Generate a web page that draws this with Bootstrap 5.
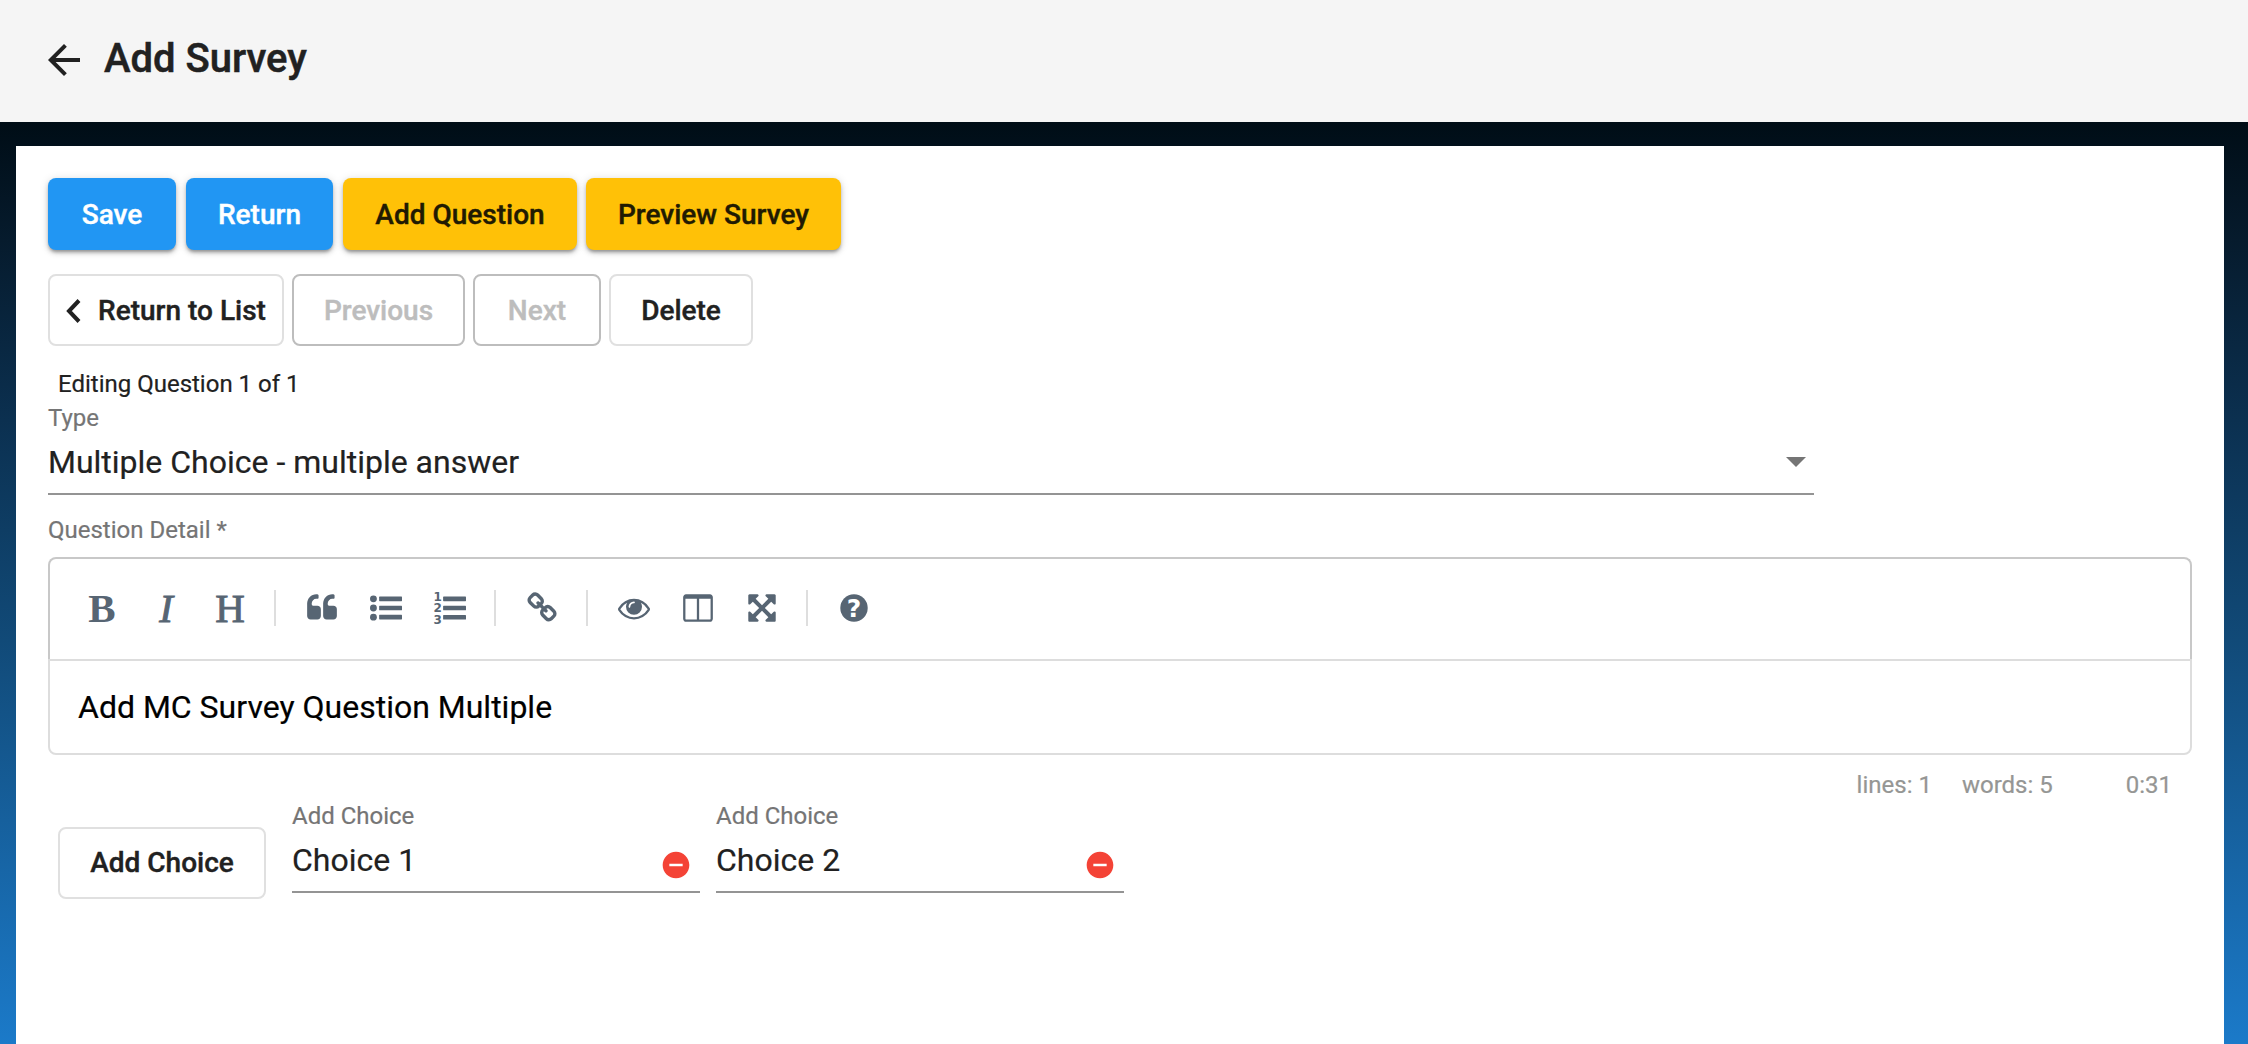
<!DOCTYPE html>
<html lang="en">
<head>
<meta charset="utf-8">
<title>Add Survey</title>
<link rel="stylesheet" href="https://cdn.jsdelivr.net/npm/bootstrap@5.3.0/dist/css/bootstrap.min.css">
<style>
  body { font-family: Roboto, sans-serif; color: #212121; font-size: 28px; line-height: 1; height: 1044px; overflow: hidden; -webkit-text-stroke: .2px currentColor;
    background: linear-gradient(180deg, #000d16 122px, #061b2d 240px, #0b3050 420px, #114a78 640px, #16609d 820px, #1b7ac9 1044px); }
  .topbar { height: 122px; background: #f5f5f5; padding: 0 40px 2px; }
  .topbar h1 { font-size: 40px; font-weight: 500; line-height: 48px; margin: 0 0 0 16px; padding-bottom: 3px; color: #212121; -webkit-text-stroke: .5px currentColor; }
  .panel { margin: 24px 24px 0 16px; padding: 32px; height: 898px; background: #fff; }
  .btn { --bs-btn-font-size: 28px; --bs-btn-font-weight: 500; --bs-btn-line-height: 1; --bs-btn-border-radius: 8px; --bs-btn-border-width: 2px;
    --bs-btn-padding-x: 0; --bs-btn-padding-y: 0; height: 72px; font-family: Roboto, sans-serif; color: #212121; display: inline-flex; align-items: center; justify-content: center; -webkit-text-stroke: .4px currentColor; }
  .btn-raised { border: 0; padding-top: 1px; box-shadow: 0 3px 3px -1px rgba(0,0,0,.25), 0 3px 5px rgba(0,0,0,.17), 0 1px 10px rgba(0,0,0,.12); }
  .btn-blue { background: #2196f3; color: #fff; }
  .btn-amber { background: #ffc107; color: #211a02; }
  .btn-line { background: #fff; border-color: #e0e0e0; }
  .btn-line:disabled { color: #bdbdbd; border-color: #bdbdbd; opacity: 1; }
  .w-save { width: 128px; } .w-return { width: 147px; margin-left: 10px; } .w-question { width: 234px; margin-left: 10px; } .w-preview { width: 255px; margin-left: 9px; }
  .w-list { width: 236px; } .w-prev { width: 173px; } .w-next { width: 128px; } .w-delete { width: 144px; } .w-choice { width: 208px; }
  .row-nav { margin-top: 24px; gap: 8px; }
  .row-nav .btn { padding-top: 2px; }
  .hint { font-size: 24px; line-height: 34px; margin: 21px 0 0 10px; }
  .field-label { font-size: 24px; line-height: 34px; color: #757575; }
  .field-value { font-size: 32px; line-height: 38px; }
  .type-field { width: 1766px; height: 94px; border-bottom: 2px solid #949494; }
  .type-value { margin-top: 8px; padding-right: 8px; }
  .detail-label { margin-top: 18px; }
  .editor-tools { margin-top: 10px; height: 102px; border: 2px solid #c8c8c8; border-bottom: 0; border-radius: 8px 8px 0 0; padding: 0 22px 2px; gap: 4px; color: #576573; }
  .tool { width: 60px; height: 60px; display: flex; align-items: center; justify-content: center; border: 0; background: none; padding: 0; color: inherit; -webkit-text-stroke: 0; }
  .tool svg { width: 32px; height: 32px; fill: currentColor; }
  .tool-letter { font-family: "Liberation Serif", serif; font-size: 41px; line-height: 60px; -webkit-text-stroke: .9px currentColor; }
  .tool-bold { font-weight: 700; -webkit-text-stroke: 0; }
  .tool-sep { width: 2px; height: 36px; margin: 0 12px 0 10px; background: #dedede; }
  .editor-text { height: 96px; border: 2px solid #ddd; border-radius: 0 0 8px 8px; padding: 0 28px; font-size: 32px; line-height: 92px; color: #000; }
  .editor-status { font-size: 24px; line-height: 28px; color: #959694; margin-top: 16px; padding-right: 20px; }
  .words { margin-left: 30px; } .cursor-pos { margin-left: 73px; }
  .choices { margin: 0 0 0 10px; }
  .choice-btn { margin-top: 28px; margin-right: 26px; }
  .choice-field { width: 408px; height: 94px; margin-right: 16px; border-bottom: 2px solid #949494; }
  .choice-value { margin-top: 8px; padding-right: 8px; }
</style>
<script src="https://cdn.jsdelivr.net/npm/bootstrap@5.3.0/dist/js/bootstrap.bundle.min.js"></script>
</head>
<body>
<header class="topbar d-flex align-items-center">
  <svg width="48" height="48" viewBox="0 0 24 24" fill="#212121"><path d="M20 11H7.83l5.59-5.59L12 4l-8 8 8 8 1.41-1.41L7.83 13H20v-2z"/></svg>
  <h1>Add Survey</h1>
</header>
<main class="panel">
  <div class="d-flex">
    <button class="btn btn-raised btn-blue w-save">Save</button>
    <button class="btn btn-raised btn-blue w-return">Return</button>
    <button class="btn btn-raised btn-amber w-question">Add Question</button>
    <button class="btn btn-raised btn-amber w-preview">Preview Survey</button>
  </div>
  <div class="d-flex row-nav">
    <button class="btn btn-line w-list"><svg class="me-3" width="16" height="26" viewBox="0 0 16 26" fill="none" stroke="#212121" stroke-width="4"><path d="M13 2.500 3 13 13 23.500"/></svg>Return to List</button>
    <button class="btn btn-line w-prev" disabled>Previous</button>
    <button class="btn btn-line w-next" disabled>Next</button>
    <button class="btn btn-line w-delete">Delete</button>
  </div>
  <div class="hint">Editing Question 1 of 1</div>
  <div class="type-field">
    <div class="field-label">Type</div>
    <div class="type-value field-value d-flex justify-content-between align-items-center">
      <span>Multiple Choice - multiple answer</span>
      <svg width="20" height="10" viewBox="0 0 20 10" fill="#757575"><path d="M0 0h20L10 10z"/></svg>
    </div>
  </div>
  <div class="field-label detail-label">Question Detail *</div>
  <div class="editor-tools d-flex align-items-center">
    <button class="tool tool-letter tool-bold">B</button>
    <button class="tool tool-letter fst-italic">I</button>
    <button class="tool tool-letter">H</button>
    <i class="tool-sep"></i>
    <button class="tool"><svg viewBox="0 0 1792 1792"><path id="quote" d="M832 960v384q0 80-56 136t-136 56h-384q-80 0-136-56t-56-136v-704q0-104 40.5-198.5t109.5-163.5 163.5-109.5 198.5-40.5h64q26 0 45 19t19 45v128q0 26-19 45t-45 19h-64q-106 0-181 75t-75 181v32q0 40 28 68t68 28h224q80 0 136 56t56 136z"/><use href="#quote" x="896"/></svg></button>
    <button class="tool"><svg viewBox="0 0 1792 1792"><circle cx="192" cy="384" r="192"/><circle cx="192" cy="896" r="192"/><circle cx="192" cy="1408" r="192"/><rect x="512" y="256" width="1280" height="256" rx="32"/><rect x="512" y="768" width="1280" height="256" rx="32"/><rect x="512" y="1280" width="1280" height="256" rx="32"/></svg></button>
    <button class="tool"><svg viewBox="0 0 32 32" overflow="visible"><g font-family="DejaVu Sans" font-weight="700" font-size="12" text-anchor="middle"><text x="3.7" y="8.6">1</text><text x="3.7" y="20.2">2</text><text x="3.7" y="31.6">3</text></g><rect x="9.1" y="4.6" width="22.9" height="4.6" rx=".6"/><rect x="9.1" y="13.7" width="22.9" height="4.6" rx=".6"/><rect x="9.1" y="22.9" width="22.9" height="4.6" rx=".6"/></svg></button>
    <i class="tool-sep"></i>
    <button class="tool"><svg viewBox="0 0 1792 1792"><path d="M1520 1216q0-40-28-68l-208-208q-28-28-68-28-42 0-72 32 3 3 19 18.500t21.500 21.500 15 19 13 25.500 3.500 27.500q0 40-28 68t-68 28q-15 0-27.500-3.500t-25.500-13-19-15-21.500-21.500-18.500-19q-33 31-33 73 0 40 28 68l206 207q27 27 68 27 40 0 68-26l147-146q28-28 28-67zm-703-705q0-40-28-68l-206-207q-28-28-68-28-39 0-68 27l-147 146q-28 28-28 67 0 40 28 68l208 208q27 27 68 27 42 0 72-31-3-3-19-18.500t-21.500-21.500-15-19-13-25.500-3.500-27.500q0-40 28-68t68-28q15 0 27.500 3.500t25.500 13 19 15 21.500 21.500 18.500 19q33-31 33-73zm895 705q0 120-85 203l-147 146q-83 83-203 83-121 0-204-85l-206-207q-83-83-83-203 0-123 88-209l-88-88q-86 88-208 88-120 0-204-84l-208-208q-84-84-84-204t85-203l147-146q83-83 203-83 121 0 204 85l206 207q83 83 83 203 0 123-88 209l88 88q86-88 208-88 120 0 204 84l208 208q84 84 84 204z"/></svg></button>
    <i class="tool-sep"></i>
    <button class="tool"><svg viewBox="0 0 1792 1792"><path d="M1664 960q-152-236-381-353 61 104 61 225 0 185-131.500 316.500t-316.500 131.500-316.500-131.500-131.500-316.500q0-121 61-225-229 117-381 353 133 205 333.500 326.500t434.500 121.500 434.500-121.500 333.500-326.500zm-720-384q0-20-14-34t-34-14q-125 0-214.500 89.500t-89.500 214.500q0 20 14 34t34 14 34-14 14-34q0-86 61-147t147-61q20 0 34-14t14-34zm848 384q0 34-20 69-140 230-376.500 368.500t-499.500 138.500-499.500-139-376.500-368q-20-35-20-69t20-69q140-229 376.500-368t499.500-139 499.500 139 376.500 368q20 35 20 69z"/></svg></button>
    <button class="tool"><svg viewBox="0 0 1792 1792"><path d="M224 1536h608v-1152h-640v1120q0 13 9.500 22.500t22.500 9.500zm1376-32v-1120h-640v1152h608q13 0 22.500-9.500t9.500-22.500zm128-1216v1216q0 66-47 113t-113 47h-1344q-66 0-113-47t-47-113v-1216q0-66 47-113t113-47h1344q66 0 113 47t47 113z"/></svg></button>
    <button class="tool"><svg viewBox="0 0 1792 1792"><path d="M1411 541l-355 355 355 355 144-144q29-31 70-14 39 17 39 59v448q0 26-19 45t-45 19h-448q-42 0-59-40-17-39 14-69l144-144-355-355-355 355 144 144q31 30 14 69-17 40-59 40h-448q-26 0-45-19t-19-45v-448q0-42 40-59 39-17 69 14l144 144 355-355-355-355-144 144q-19 19-45 19-12 0-24-5-40-17-40-59v-448q0-26 19-45t45-19h448q42 0 59 40 17 39-14 69l-144 144 355 355 355-355-144-144q-31-30-14-69 17-40 59-40h448q26 0 45 19t19 45v448q0 42-39 59-13 5-25 5-26 0-45-19z"/></svg></button>
    <i class="tool-sep"></i>
    <button class="tool"><svg viewBox="0 0 32 32"><circle cx="16" cy="16" r="13.7"/><text x="16" y="25" fill="#fff" font-family="DejaVu Sans" font-weight="700" font-size="25" text-anchor="middle">?</text></svg></button>
  </div>
  <div class="editor-text">Add MC Survey Question Multiple</div>
  <div class="editor-status d-flex justify-content-end">
    <span>lines: 1</span><span class="words">words: 5</span><span class="cursor-pos">0:31</span>
  </div>
  <div class="choices d-flex">
    <button class="btn btn-line w-choice choice-btn">Add Choice</button>
    <div class="choice-field">
      <div class="field-label">Add Choice</div>
      <div class="choice-value field-value d-flex justify-content-between">
        <span>Choice 1</span>
        <svg class="mt-2" width="32" height="32" viewBox="0 0 24 24"><path fill="#f44336" d="M12 2C6.480 2 2 6.480 2 12s4.480 10 10 10 10-4.480 10-10S17.520 2 12 2zm5 11H7v-2h10v2z"/></svg>
      </div>
    </div>
    <div class="choice-field">
      <div class="field-label">Add Choice</div>
      <div class="choice-value field-value d-flex justify-content-between">
        <span>Choice 2</span>
        <svg class="mt-2" width="32" height="32" viewBox="0 0 24 24"><path fill="#f44336" d="M12 2C6.480 2 2 6.480 2 12s4.480 10 10 10 10-4.480 10-10S17.520 2 12 2zm5 11H7v-2h10v2z"/></svg>
      </div>
    </div>
  </div>
</main>
</body>
</html>
